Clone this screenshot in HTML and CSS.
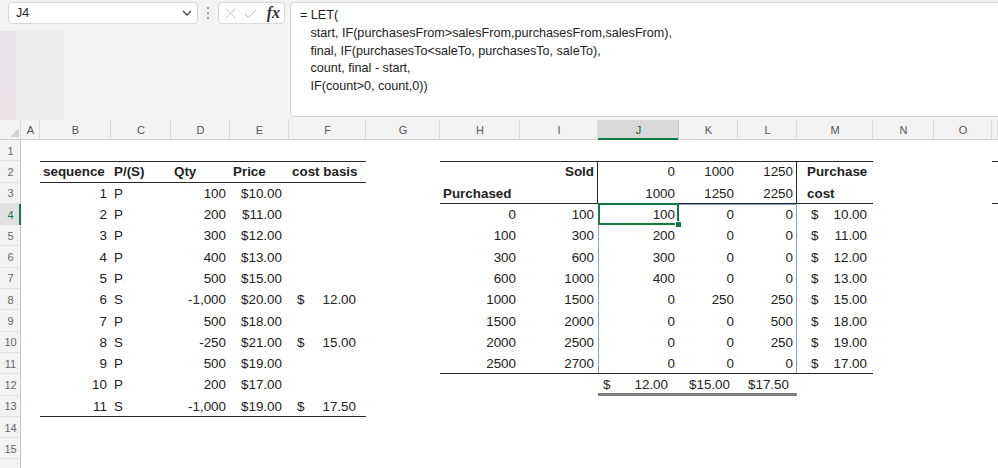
FILE: index.html
```html
<!DOCTYPE html>
<html lang="en">
<head>
    <meta charset="utf-8"/>
    <title>Cost basis - LET</title>
    <link rel="stylesheet" href="styles.css">
</head>
<body>
    <div class="topbar">
        <div class="left-pane">
            <div class="controls">
                <div class="name-box">
                    <span>J4</span>
                    <svg class="chevron" width="10" height="6" viewBox="0 0 10 6"><polyline points="1,1 5,5 9,1" fill="none" stroke="#444" stroke-width="1.3"/></svg>
                </div>
                <svg class="grip" width="4" height="14" viewBox="0 0 4 14"><circle cx="2" cy="2" r="1" fill="#8a8a8a"/><circle cx="2" cy="7" r="1" fill="#8a8a8a"/><circle cx="2" cy="12" r="1" fill="#8a8a8a"/></svg>
                <div class="fx-box">
                    <svg width="13" height="13" viewBox="0 0 13 13"><path d="M1 1 L12 12 M12 1 L1 12" stroke="#b9b9b9" stroke-width="1.1" fill="none"/></svg>
                    <svg width="15" height="13" viewBox="0 0 15 13"><path d="M1 7 L5 11 L14 2" stroke="#b9b9b9" stroke-width="1.1" fill="none"/></svg>
                    <i class="fx">fx</i>
                </div>
            </div>
            <div class="backdrop">
                <div class="tint-a"></div>
                <div class="tint-b"></div>
            </div>
        </div>
        <div class="formula">= LET(
   start, IF(purchasesFrom&gt;salesFrom,purchasesFrom,salesFrom),
   final, IF(purchasesTo&lt;saleTo, purchasesTo, saleTo),
   count, final - start,
   IF(count&gt;0, count,0))</div>
    </div>

    <table class="sheet">
        <colgroup>
            <col style="width:21px"><col style="width:19px"><col style="width:71px"><col style="width:60px">
            <col style="width:59px"><col style="width:59px"><col style="width:77px"><col style="width:74px">
            <col style="width:80px"><col style="width:78px"><col style="width:81px"><col style="width:59px">
            <col style="width:59px"><col style="width:76px"><col style="width:61px"><col style="width:58px">
            <col style="width:6px">
        </colgroup>
        <tr>
            <th class="col corner"></th><th class="col">A</th><th class="col">B</th><th class="col">C</th>
            <th class="col">D</th><th class="col">E</th><th class="col">F</th><th class="col">G</th>
            <th class="col">H</th><th class="col">I</th><th class="col sel">J</th><th class="col">K</th>
            <th class="col">L</th><th class="col">M</th><th class="col">N</th><th class="col">O</th><th class="col"></th>
        </tr>
        <tr>
            <td class="rh">1</td><td></td><td></td><td></td><td></td><td></td><td></td><td></td>
            <td></td><td></td><td></td><td></td><td></td><td></td><td></td><td></td><td></td>
        </tr>
        <tr>
            <td class="rh">2</td><td></td>
            <td class="b tx bt bb">sequence</td><td class="b tx bt bb">P/(S)</td><td class="b tx bt bb">Qty</td>
            <td class="b tx bt bb">Price</td><td class="b tx bt bb">cost basis</td><td></td>
            <td class="bt"></td><td class="b bt br">Sold</td><td class="bt">0</td><td class="bt">1000</td>
            <td class="bt br">1250</td><td class="b tx bt ind">Purchase</td><td></td><td></td><td class="bt"></td>
        </tr>
        <tr>
            <td class="rh">3</td><td></td>
            <td>1</td><td class="tx">P</td><td>100</td><td class="pr7">$10.00</td><td></td><td></td>
            <td class="b tx bb">Purchased</td><td class="bb br"></td><td class="bb">1000</td><td class="bb">1250</td>
            <td class="bb br">2250</td><td class="b tx bb ind">cost</td><td></td><td></td><td class="bb"></td>
        </tr>
        <tr>
            <td class="rh sel">4</td><td></td>
            <td>2</td><td class="tx">P</td><td>200</td><td class="pr7">$11.00</td><td></td><td></td>
            <td>0</td><td>100</td><td class="active sl st">100</td><td class="st">0</td><td class="st sr">0</td>
            <td class="acm"><div class="acct"><span>$</span><span>10.00</span></div></td><td></td><td></td><td></td>
        </tr>
        <tr>
            <td class="rh">5</td><td></td>
            <td>3</td><td class="tx">P</td><td>300</td><td class="pr7">$12.00</td><td></td><td></td>
            <td>100</td><td>300</td><td class="sl">200</td><td>0</td><td class="sr">0</td>
            <td class="acm"><div class="acct"><span>$</span><span>11.00</span></div></td><td></td><td></td><td></td>
        </tr>
        <tr>
            <td class="rh">6</td><td></td>
            <td>4</td><td class="tx">P</td><td>400</td><td class="pr7">$13.00</td><td></td><td></td>
            <td>300</td><td>600</td><td class="sl">300</td><td>0</td><td class="sr">0</td>
            <td class="acm"><div class="acct"><span>$</span><span>12.00</span></div></td><td></td><td></td><td></td>
        </tr>
        <tr>
            <td class="rh">7</td><td></td>
            <td>5</td><td class="tx">P</td><td>500</td><td class="pr7">$15.00</td><td></td><td></td>
            <td>600</td><td>1000</td><td class="sl">400</td><td>0</td><td class="sr">0</td>
            <td class="acm"><div class="acct"><span>$</span><span>13.00</span></div></td><td></td><td></td><td></td>
        </tr>
        <tr>
            <td class="rh">8</td><td></td>
            <td>6</td><td class="tx">S</td><td>-1,000</td><td class="pr7">$20.00</td>
            <td class="acf"><div class="acct"><span>$</span><span>12.00</span></div></td><td></td>
            <td>1000</td><td>1500</td><td class="sl">0</td><td>250</td><td class="sr">250</td>
            <td class="acm"><div class="acct"><span>$</span><span>15.00</span></div></td><td></td><td></td><td></td>
        </tr>
        <tr>
            <td class="rh">9</td><td></td>
            <td>7</td><td class="tx">P</td><td>500</td><td class="pr7">$18.00</td><td></td><td></td>
            <td>1500</td><td>2000</td><td class="sl">0</td><td>0</td><td class="sr">500</td>
            <td class="acm"><div class="acct"><span>$</span><span>18.00</span></div></td><td></td><td></td><td></td>
        </tr>
        <tr>
            <td class="rh">10</td><td></td>
            <td>8</td><td class="tx">S</td><td>-250</td><td class="pr7">$21.00</td>
            <td class="acf"><div class="acct"><span>$</span><span>15.00</span></div></td><td></td>
            <td>2000</td><td>2500</td><td class="sl">0</td><td>0</td><td class="sr">250</td>
            <td class="acm"><div class="acct"><span>$</span><span>19.00</span></div></td><td></td><td></td><td></td>
        </tr>
        <tr>
            <td class="rh">11</td><td></td>
            <td>9</td><td class="tx">P</td><td>500</td><td class="pr7">$19.00</td><td></td><td></td>
            <td class="bb">2500</td><td class="bb">2700</td><td class="sl bb">0</td><td class="bb">0</td><td class="sr bb">0</td>
            <td class="acm bb"><div class="acct"><span>$</span><span>17.00</span></div></td><td></td><td></td><td></td>
        </tr>
        <tr>
            <td class="rh">12</td><td></td>
            <td>10</td><td class="tx">P</td><td>200</td><td class="pr7">$17.00</td><td></td><td></td>
            <td></td><td></td>
            <td class="acj gb"><div class="acct"><span>$</span><span>12.00</span></div></td>
            <td class="pr8 gb">$15.00</td><td class="pr8 gb">$17.50</td>
            <td></td><td></td><td></td><td></td>
        </tr>
        <tr>
            <td class="rh">13</td><td></td>
            <td class="bb">11</td><td class="tx bb">S</td><td class="bb">-1,000</td><td class="pr7 bb">$19.00</td>
            <td class="acf bb"><div class="acct"><span>$</span><span>17.50</span></div></td><td></td>
            <td></td><td></td><td></td><td></td><td></td><td></td><td></td><td></td><td></td>
        </tr>
        <tr>
            <td class="rh">14</td><td></td><td></td><td></td><td></td><td></td><td></td><td></td>
            <td></td><td></td><td></td><td></td><td></td><td></td><td></td><td></td><td></td>
        </tr>
        <tr>
            <td class="rh">15</td><td></td><td></td><td></td><td></td><td></td><td></td><td></td>
            <td></td><td></td><td></td><td></td><td></td><td></td><td></td><td></td><td></td>
        </tr>
        <tr>
            <td class="rh"></td><td></td><td></td><td></td><td></td><td></td><td></td><td></td>
            <td></td><td></td><td></td><td></td><td></td><td></td><td></td><td></td><td></td>
        </tr>
    </table>
</body>
</html>
```

FILE: styles.css
```css
body {
    margin: 0;
    width: 998px;
    height: 468px;
    overflow: hidden;
    background: #fff;
    color: #222;
    font-family: "Liberation Sans", Arial, sans-serif;
}

/* formula bar */
.topbar {
    display: flex;
    height: 120px;
    background: #f3f3f3;
}

.left-pane {
    width: 290px;
    flex: none;
}

.controls {
    display: flex;
    align-items: center;
    height: 22px;
    margin-top: 2px;
    padding-left: 8px;
}

.name-box {
    display: flex;
    align-items: center;
    justify-content: space-between;
    box-sizing: border-box;
    width: 190px;
    height: 22px;
    padding: 0 5px 0 7px;
    background: #fff;
    border: 1px solid #d8d8d8;
    border-radius: 4px;
    font-size: 12.5px;
}

.grip {
    margin: 0 8px 0 8px;
}

.fx-box {
    display: flex;
    align-items: center;
    gap: 8px;
    box-sizing: border-box;
    width: 67px;
    height: 22px;
    padding: 0 4px 0 6px;
    background: #fff;
    border: 1px solid #d8d8d8;
    border-radius: 4px;
}

.fx {
    margin-left: 1px;
    font-family: "Liberation Serif", serif;
    font-size: 16px;
    font-weight: bold;
    color: #333;
}

.backdrop {
    display: flex;
    height: 89px;
    margin-top: 7px;
}

.tint-a {
    width: 16px;
    background: linear-gradient(180deg, #e8e4ec, #ebe2e6);
}

.tint-b {
    width: 48px;
    background: #eeecef;
}

.formula {
    flex: 1;
    height: 115px;
    margin: 2px -6px 0 0;
    box-sizing: border-box;
    padding: 4px 0 0 9px;
    background: #fff;
    border: 1px solid #d8d8d8;
    border-radius: 4px;
    font-size: 12.6px;
    line-height: 17.8px;
    white-space: pre;
}

/* grid */
.sheet {
    table-layout: fixed;
    width: 998px;
    border-collapse: separate;
    border-spacing: 0;
}

.col {
    height: 20px;
    padding: 0;
    background: #f3f3f3;
    font-size: 11px;
    font-weight: normal;
    color: #555;
    text-align: center;
    box-shadow: inset -1px 0 #dcdcdc, inset 0 -1px #cdcdcd;
}

.col.sel {
    background: #d9d9d9;
    color: #0e5c2f;
    box-shadow: inset -1px 0 #c4c4c4, inset 0 -2px #107c41;
}

.corner {
    position: relative;
}

.corner::after {
    content: "";
    position: absolute;
    right: 2px;
    bottom: 3px;
    border-left: 9px solid transparent;
    border-bottom: 9px solid #d2d2d2;
}

td {
    box-sizing: border-box;
    height: 21.3px;
    padding: 0 4px 0 3px;
    font-size: 13.4px;
    white-space: nowrap;
    overflow: hidden;
    text-align: right;
    box-shadow: var(--bt, 0 0 #0000), var(--bb, 0 0 #0000), var(--bl, 0 0 #0000), var(--br, 0 0 #0000);
}

td.rh {
    padding: 0;
    background: #f3f3f3;
    font-size: 11px;
    color: #666;
    text-align: center;
    box-shadow: inset -1px 0 #c8c8c8, inset 0 -1px #e2e2e2;
}

td.rh.sel {
    background: #e0e0e0;
    color: #107c41;
    box-shadow: inset -2px 0 #107c41, inset 0 -1px #e2e2e2;
}

.tx { text-align: left; }
.b { font-weight: bold; }
.ind { padding-left: 10px; }
.pr7 { padding-right: 7px; }
.pr8 { padding-right: 8px; }

/* borders */
.bt { --bt: inset 0 1px #262626; }
.bb { --bb: inset 0 -1px #262626; }
.br { --br: inset -1px 0 #262626; }
.gb { --bb: inset 0 -3px #808080; }

/* spill range J4:L11 */
.sl { --bl: inset 1px 0 #7fa2d8; }
.sr { --br: inset -1px 0 #7fa2d8; }
.st { --bt: inset 0 1px #7fa2d8; }

/* accounting format */
.acct {
    display: flex;
    justify-content: space-between;
}

.acf { padding: 0 10px 0 8px; }
.acm { padding: 0 6px 0 14px; }
.acj { padding: 0 11px 0 5px; }

.active {
    position: relative;
    overflow: visible;
}

.active::after {
    content: "";
    position: absolute;
    left: 0;
    right: 0;
    top: -1px;
    bottom: 0;
    border: 2px solid #107c41;
}

.active::before {
    content: "";
    position: absolute;
    right: -3px;
    bottom: -3px;
    z-index: 2;
    width: 5px;
    height: 5px;
    background: #107c41;
    border: 1px solid #fff;
}
```
